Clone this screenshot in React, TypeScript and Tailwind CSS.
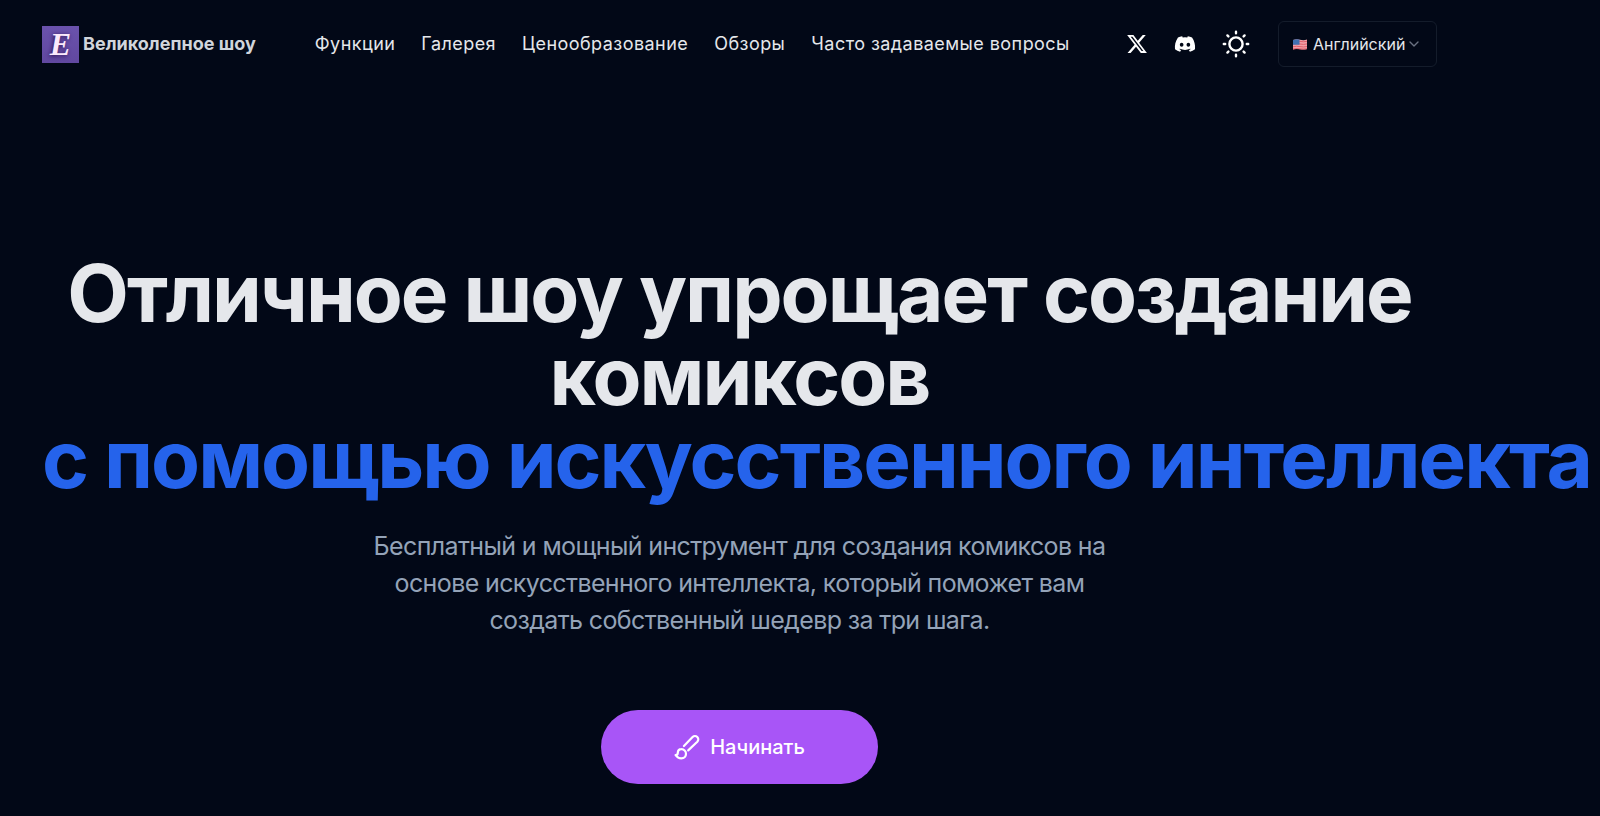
import type { ReactNode } from 'react'
import { ChevronDown } from 'lucide-react'
import { FaDiscord, FaXTwitter } from 'react-icons/fa6'

const NAV_LINKS = [
    { label: 'Функции', href: '#features' },
    { label: 'Галерея', href: '#gallery' },
    { label: 'Ценообразование', href: '#pricing' },
    { label: 'Обзоры', href: '#reviews' },
    { label: 'Часто задаваемые вопросы', href: '#faq' },
]

function Logo() {
    return (
        <a href="#" className="flex items-center gap-1">
            <span className="flex h-[37px] w-[37px] items-center justify-center bg-gradient-to-b from-[#6a52ac] to-[#6148a0] font-['Liberation_Serif',serif] text-[32px] leading-none font-bold text-[#fbe9fb] italic [text-shadow:-1px_1px_4px_#2a0f4d]">
                E
            </span>
            <span className="text-lg font-bold whitespace-nowrap text-[#d1d5db]">Великолепное шоу</span>
        </a>
    )
}

function SunIcon() {
    return (
        <svg viewBox="0 0 28 28" className="h-7 w-7" fill="none" stroke="currentColor" strokeWidth="2.4" strokeLinecap="round">
            <circle cx="14" cy="14" r="6.6" />
            <path d="M14 1.8v1.4M14 24.8v1.4M1.8 14h1.4M24.8 14h1.4M5.4 5.4l1 1M21.6 21.6l1 1M5.4 22.6l1-1M21.6 6.4l1-1" />
        </svg>
    )
}

function UsFlag() {
    return (
        <svg viewBox="0 0 14 11" className="h-[11px] w-[14px] shrink-0" aria-hidden="true">
            <path d="M0 1Q3.5 -.2 7 .7T14 .6V10Q10.5 11 7 10.2T0 10.4Z" fill="#f0a0a8" />
            <path d="M0 2.6Q3.5 1.6 7 2.4T14 2.3M0 5.2Q3.5 4.2 7 5T14 4.9M0 7.8Q3.5 6.8 7 7.6T14 7.5M0 10Q3.5 9.2 7 9.8T14 9.7" fill="none" stroke="#e0606c" strokeWidth="1" />
            <path d="M0 1Q3.5 -.2 6.5 .6V5.8H0Z" fill="#3f6fb0" />
        </svg>
    )
}

function BrushIcon() {
    return (
        <svg viewBox="0 0 26 26" className="h-[26px] w-[26px]" fill="none" stroke="currentColor" strokeWidth="2.2" strokeLinecap="round" strokeLinejoin="round">
            <path d="M9.9 12 18.6 3a3.3 3.3 0 0 1 4.7 4.7L14.2 16.4" />
            <path d="M7.4 15.2c-2.6 0-3.6 1.8-3.6 3.6 0 1.3-1.1 2.3-2.2 2.4 1.4 2 3.4 3.2 5.7 3.2 3 0 4.7-2.1 4.7-4.7a4.5 4.5 0 0 0-4.6-4.5Z" />
        </svg>
    )
}

function IconLink({ label, href, children }: { label: string; href: string; children: ReactNode }) {
    return (
        <a href={href} aria-label={label} className="text-white hover:text-gray-300">
            {children}
        </a>
    )
}

function LanguageSelect() {
    return (
        <label className="relative flex h-[46px] items-center gap-[6px] rounded-md border border-[#141c2b] pl-[14px]">
            <UsFlag />
            <select aria-label="Язык" className="appearance-none bg-transparent pr-[30px] text-base text-[#e5e7eb] outline-none">
                <option>Английский</option>
            </select>
            <ChevronDown className="pointer-events-none absolute right-[14px] h-4 w-4 text-gray-500" />
        </label>
    )
}

function Header() {
    return (
        <header className="flex items-center justify-between pt-[21px]">
            <div className="flex items-center gap-[59px]">
                <Logo />
                <nav className="flex items-center gap-[26px] text-lg tracking-wide whitespace-nowrap text-[#e5e7eb]">
                    {NAV_LINKS.map((link) => (
                        <a key={link.label} href={link.href} className="hover:text-white">
                            {link.label}
                        </a>
                    ))}
                </nav>
            </div>
            <div className="flex items-center gap-7">
                <div className="flex items-center gap-[26px]">
                    <IconLink label="X" href="#x">
                        <FaXTwitter className="h-[22px] w-[22px]" />
                    </IconLink>
                    <IconLink label="Discord" href="#discord">
                        <FaDiscord className="h-[22px] w-[22px]" />
                    </IconLink>
                    <button type="button" aria-label="Тема" className="text-white">
                        <SunIcon />
                    </button>
                </div>
                <LanguageSelect />
            </div>
        </header>
    )
}

function Hero() {
    return (
        <section className="flex flex-col items-center pt-[184px] pb-8 text-center">
            <h1 className="w-full text-[80px] leading-[83px] font-bold tracking-tight text-[#e5e7eb]">
                Отличное шоу упрощает создание комиксов
                <span className="block text-left whitespace-nowrap text-[#2563eb]">с помощью искусственного интеллекта</span>
            </h1>
            <p className="mt-7 max-w-[760px] text-[25px] leading-[37px] tracking-tight text-[#94a3b8]">
                Бесплатный и мощный инструмент для создания комиксов на основе искусственного интеллекта, который поможет вам создать собственный шедевр за три шага.
            </p>
            <button type="button" className="mt-[71px] flex items-center gap-[10px] rounded-full bg-[#a855f7] px-[73px] py-[23px] text-xl font-medium text-white hover:bg-[#9333ea]">
                <BrushIcon />
                Начинать
            </button>
        </section>
    )
}

export default function App() {
    return (
        <div className="min-h-screen overflow-x-hidden border-b border-[#334155] bg-[#020817] pr-[163px] pl-[42px] font-['Inter',sans-serif]">
            <Header />
            <Hero />
        </div>
    )
}
